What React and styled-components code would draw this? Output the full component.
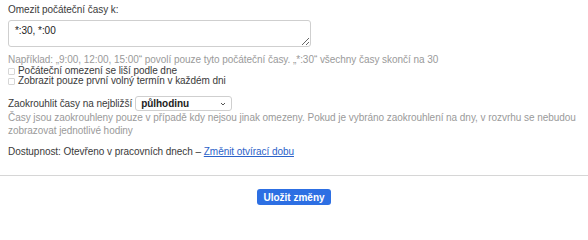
import React, { useState } from 'react';
import styled, { createGlobalStyle } from 'styled-components';

const GlobalStyle = createGlobalStyle`
  html, body {
    margin: 0;
    padding: 0;
    background: #ffffff;
  }
  body {
    font-family: 'Liberation Sans', Arial, sans-serif;
    font-size: 10px;
    letter-spacing: -0.05px;
    color: #3a3a3a;
  }
`;

const Page = styled.div`
  width: 588px;
  height: 218px;
  display: flex;
  flex-direction: column;
`;

const Form = styled.div`
  padding: 4px 4px 0 8px;
  display: flex;
  flex-direction: column;
`;

const Label = styled.label`
  display: block;
  line-height: 12px;
  margin-bottom: 4px;
`;

const TextArea = styled.textarea`
  box-sizing: border-box;
  width: 303px;
  height: 27px;
  padding: 4px 6px;
  border: 1px solid #cfcfcf;
  border-radius: 3px;
  font-family: inherit;
  font-size: 10px;
  letter-spacing: inherit;
  color: #222;
  resize: vertical;
  outline: none;
`;

const Hint = styled.div`
  color: #9a9a9a;
  line-height: ${(p) => (p.$loose ? '13px' : '12px')};
  margin-top: ${(p) => p.$top || 0}px;
`;

const CheckRow = styled.label`
  display: flex;
  align-items: center;
  gap: 3px;
  line-height: 10px;
`;

const Box = styled.span`
  box-sizing: border-box;
  width: 7px;
  height: 7px;
  border: 1px solid #d6d6d6;
  border-radius: 1px;
  background: #fff;
`;

const SelectRow = styled.div`
  display: flex;
  align-items: center;
  gap: 3px;
  margin-top: 10px;
`;

const Select = styled.div`
  box-sizing: border-box;
  width: 97px;
  height: 15px;
  border: 1px solid #cfcfcf;
  border-radius: 3px;
  display: flex;
  align-items: center;
  justify-content: space-between;
  padding: 0 5px;
  font-weight: bold;
  color: #222;
`;

const Availability = styled.div`
  margin-top: 9px;
  line-height: 12px;
`;

const Link = styled.a`
  color: #2b62c9;
  text-decoration: underline;
`;

const Rule = styled.hr`
  margin: 17px 0 0;
  border: 0;
  border-top: 1px solid #d6d6d6;
`;

const Footer = styled.div`
  display: flex;
  justify-content: center;
  padding-top: 13px;
`;

const SaveButton = styled.button`
  box-sizing: border-box;
  height: 16px;
  padding: 0 6px;
  border: 0;
  border-radius: 3px;
  background: #2d6fe3;
  color: #fff;
  font-family: inherit;
  font-size: 10px;
  font-weight: bold;
  cursor: pointer;
`;

function Chevron() {
  return (
    <svg width="6" height="4" viewBox="0 0 6 4">
      <path d="M1 1l2 2 2-2" fill="none" stroke="#555" strokeWidth="1" />
    </svg>
  );
}

export default function App() {
  const [value, setValue] = useState('*:30, *:00');
  return (
    <Page>
      <GlobalStyle />
      <Form>
        <Label>Omezit počáteční časy k:</Label>
        <TextArea value={value} onChange={(e) => setValue(e.target.value)} />
        <Hint $top={7}>
          Například: „9:00, 12:00, 15:00“ povolí pouze tyto počáteční časy. „*:30“ všechny časy skončí na 30
        </Hint>
        <CheckRow>
          <Box />
          Počáteční omezení se liší podle dne
        </CheckRow>
        <CheckRow>
          <Box />
          Zobrazit pouze první volný termín v každém dni
        </CheckRow>
        <SelectRow>
          Zaokrouhlit časy na nejbližší
          <Select>
            půlhodinu
            <Chevron />
          </Select>
        </SelectRow>
        <Hint $loose>
          Časy jsou zaokrouhleny pouze v případě kdy nejsou jinak omezeny. Pokud je vybráno zaokrouhlení na dny, v rozvrhu se nebudou zobrazovat jednotlivé hodiny
        </Hint>
        <Availability>
          Dostupnost: Otevřeno v pracovních dnech – <Link href="#">Změnit otvírací dobu</Link>
        </Availability>
      </Form>
      <Rule />
      <Footer>
        <SaveButton>Uložit změny</SaveButton>
      </Footer>
    </Page>
  );
}
